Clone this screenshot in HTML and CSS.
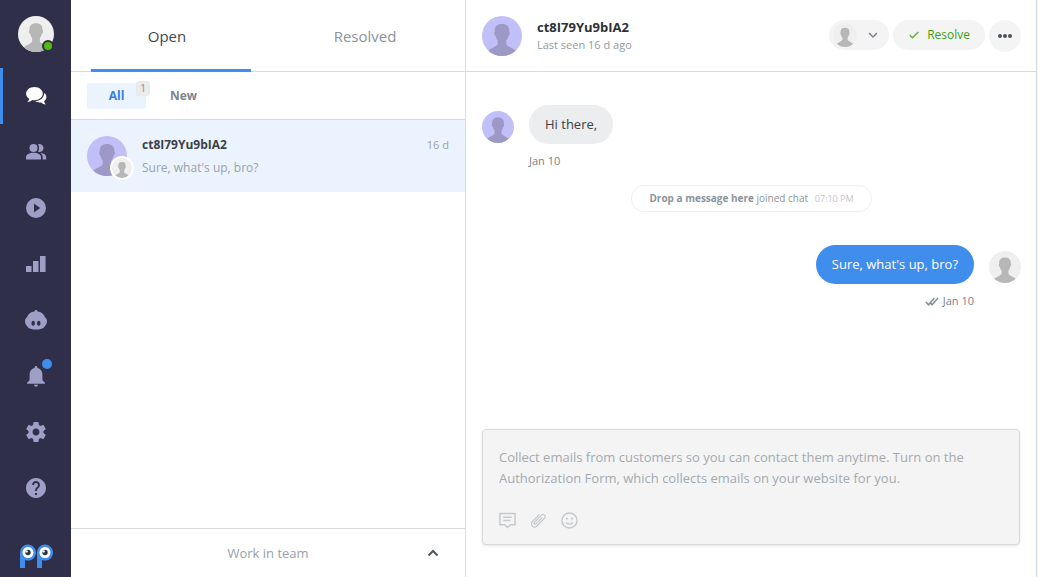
FILE: index.html
```html
<!DOCTYPE html>
<html lang="en">
<head>
    <meta charset="UTF-8">
    <meta name="viewport" content="width=device-width, initial-scale=1.0">
    <title>Inbox</title>
    <link rel="stylesheet" href="styles.css">
</head>
<body>
    <!-- Shared shapes -->
    <svg class="sprite" aria-hidden="true">
        <symbol id="person" viewBox="0 0 40 40">
            <path d="M20 8c-5 0-7.600 2.600-7.300 7.500-1 .5-.4 4 .9 4.500.5 2.300 1.200 3.600 2.100 4.500v3.500c-1 3-6 3.500-9.600 7C9 39 14 41 20 41s11-2 13.900-6c-3.600-3.500-8.600-4-9.600-7v-3.500c.9-.9 1.600-2.200 2.100-4.500 1.300-.5 1.900-4 .9-4.500C27.600 10.600 25 8 20 8z"/>
        </symbol>
    </svg>

    <div class="app">
        <nav class="sidebar" aria-label="Main">
            <button class="profile" type="button" aria-label="Profile">
                <svg class="avatar gray"><use href="#person"/></svg>
                <span class="online"></span>
            </button>
            <a class="nav-item active" href="#" aria-label="Inbox">
                <svg viewBox="0 0 22 20" width="22" height="20">
                    <path d="M9.500 1C4.800 1 1.100 3.900 1.100 7.600c0 2.200 1.200 4 3.100 5.200-.2 1.300-1 2.400-2 3.200 1.900 0 3.800-.6 5.200-1.900.7.1 1.400.2 2.100.2 4.600 0 8.300-3 8.300-6.700S14.100 1 9.500 1z"/>
                    <path d="M19.200 7c1.400 1 2.200 2.400 2.200 4 0 1.700-.9 3.200-2.300 4.200.2 1.200.8 2.300 1.700 3.200-1.900 0-3.500-.7-4.700-2-2.200.3-4.400-.1-6-1.100C15 15 19 12 19.200 7z"/>
                </svg>
            </a>
            <a class="nav-item" href="#" aria-label="Contacts">
                <svg viewBox="0 0 22 20" width="22" height="20">
                    <circle cx="8.500" cy="6" r="4"/>
                    <path d="M1 17.500v-2.200c0-3 3.500-4.600 7.500-4.600s7.500 1.600 7.500 4.600v2.200z"/>
                    <path d="M13 2.300a4 4 0 1 1 0 7.400c1.500-2.200 1.500-5.200 0-7.400zM15.500 11c3.500.3 5.700 1.900 5.700 4.300v2.200h-3.500v-2.200c0-1.700-.8-3.200-2.200-4.300z"/>
                </svg>
            </a>
            <a class="nav-item" href="#" aria-label="Campaigns">
                <svg viewBox="0 0 20 20" width="20" height="20">
                    <path fill-rule="evenodd" d="M10 0a10 10 0 1 0 0 20 10 10 0 0 0 0-20zM8 5.500l6.200 4.500L8 14.500z"/>
                </svg>
            </a>
            <a class="nav-item" href="#" aria-label="Statistics">
                <svg viewBox="0 0 20 18" width="20" height="18">
                    <path d="M0 11h5.500v6H0zM7 6h5.500v11H7zM14 1h5.500v16H14z"/>
                </svg>
            </a>
            <a class="nav-item" href="#" aria-label="Chatbots">
                <svg viewBox="0 0 22 20" width="22" height="20">
                    <path fill-rule="evenodd" d="M11 0c.9 0 1.500.7 1.500 1.600C16 2 19 4 20 7.300c1.300.8 2 2.200 2 4s-.6 3.300-1.700 4.100C19 18.500 15 19.500 11 19.500s-8-1-9.300-4.100C.6 14.600 0 13.100 0 11.300s.7-3.200 2-4C3 4 6 2 9.500 1.600 9.500.7 10.100 0 11 0zM8.200 10.700c-2.300 0-2.300 5 0 5s2.300-5 0-5zm5.600 0c-2.300 0-2.300 5 0 5s2.300-5 0-5z"/>
                </svg>
            </a>
            <a class="nav-item" href="#" aria-label="Notifications">
                <svg viewBox="0 0 20 22" width="20" height="22">
                    <path d="M10 1c-.8 0-1.400.6-1.400 1.400v.5C5.500 3.500 3.600 6 3.600 9.200v6L1 17.800v1h18v-1l-2.600-2.600v-6c0-3.200-1.900-5.700-5-6.300v-.5C11.400 1.600 10.800 1 10 1zM8 19.800a2 2 0 0 0 4 0z"/>
                </svg>
                <span class="nav-dot"></span>
            </a>
            <a class="nav-item" href="#" aria-label="Settings">
                <svg viewBox="2 2 20 20" width="20" height="20">
                    <path d="M19.430 12.980c.04-.32.070-.64.070-.98s-.03-.66-.07-.98l2.110-1.650c.19-.15.24-.42.120-.64l-2-3.460c-.12-.22-.39-.3-.61-.22l-2.490 1c-.52-.4-1.080-.73-1.690-.98l-.38-2.650C14.460 2.180 14.250 2 14 2h-4c-.25 0-.46.18-.49.42l-.38 2.650c-.61.25-1.170.59-1.690.98l-2.490-1c-.23-.09-.49 0-.61.22l-2 3.460c-.13.220-.07.490.12.640l2.110 1.650c-.04.320-.07.650-.07.980s.03.660.07.980l-2.110 1.650c-.19.150-.24.420-.12.640l2 3.460c.12.220.39.300.61.220l2.490-1c.52.400 1.080.730 1.690.980l.38 2.650c.03.240.24.420.49.420h4c.25 0 .46-.18.49-.42l.38-2.650c.61-.25 1.170-.59 1.690-.98l2.490 1c.23.090.49 0 .61-.22l2-3.460c.12-.22.070-.49-.12-.64l-2.110-1.650zM12 15.500c-1.930 0-3.500-1.570-3.500-3.500s1.570-3.500 3.500-3.500 3.500 1.570 3.500 3.500-1.570 3.500-3.500 3.500z"/>
                </svg>
            </a>
            <a class="nav-item" href="#" aria-label="Help">
                <svg viewBox="2 2 20 20" width="20" height="20">
                    <path d="M12 2C6.480 2 2 6.480 2 12s4.480 10 10 10 10-4.480 10-10S17.520 2 12 2zm1 17h-2v-2h2v2zm2.070-7.750l-.9.920C13.450 12.900 13 13.500 13 15h-2v-.5c0-1.100.45-2.100 1.170-2.830l1.240-1.260c.37-.36.590-.86.590-1.410 0-1.100-.9-2-2-2s-2 .9-2 2H8c0-2.210 1.790-4 4-4s4 1.790 4 4c0 .88-.36 1.680-.93 2.250z"/>
                </svg>
            </a>
            <a class="logo" href="#" aria-label="Home">
                <svg viewBox="0 0 34 24" width="34" height="24">
                    <path fill="#3f8eee" d="M1 24V9a8 8 0 1 1 5 7v8zM18 24V9a8 8 0 1 1 5 7v8z"/>
                    <circle cx="9" cy="8.500" r="5.500" fill="#fff"/>
                    <circle cx="26" cy="8.500" r="5.500" fill="#fff"/>
                    <circle cx="9" cy="8.500" r="2.700" fill="#263746"/>
                    <circle cx="26" cy="8.500" r="2.700" fill="#263746"/>
                    <circle cx="7.600" cy="7.400" r="1.200" fill="#fff"/>
                    <circle cx="24.600" cy="7.400" r="1.200" fill="#fff"/>
                </svg>
            </a>
        </nav>

        <section class="inbox" aria-label="Conversations">
            <div class="tabs">
                <button class="tab open active" type="button">Open</button>
                <button class="tab" type="button">Resolved</button>
            </div>
            <div class="filters">
                <button class="filter active" type="button">All<span class="count">1</span></button>
                <button class="filter" type="button">New</button>
            </div>
            <div class="list">
                <a class="dialog" href="#">
                    <span class="dialog-avatar">
                        <svg class="avatar violet"><use href="#person"/></svg>
                        <svg class="avatar gray mini"><use href="#person"/></svg>
                    </span>
                    <span class="dialog-text">
                        <span class="dialog-top"><strong>ct8I79Yu9bIA2</strong><time>16 d</time></span>
                        <span class="preview">Sure, what's up, bro?</span>
                    </span>
                </a>
            </div>
            <button class="team" type="button">
                <span>Work in team</span>
                <svg viewBox="0 0 12 8" width="12" height="8"><path d="M1.500 6.500L6 2l4.500 4.500" fill="none" stroke="#4d565f" stroke-width="2"/></svg>
            </button>
        </section>

        <main class="chat">
            <header class="chat-header">
                <svg class="avatar violet"><use href="#person"/></svg>
                <div class="chat-user">
                    <h1>ct8I79Yu9bIA2</h1>
                    <p>Last seen 16 d ago</p>
                </div>
                <div class="actions">
                    <button class="assign" type="button" aria-label="Assign">
                        <svg class="avatar gray small"><use href="#person"/></svg>
                        <svg viewBox="0 0 10 6" width="10" height="6"><path d="M1 1l4 4 4-4" fill="none" stroke="#77818b" stroke-width="1.400"/></svg>
                    </button>
                    <button class="resolve" type="button">
                        <svg viewBox="0 0 10 8" width="10" height="8"><path d="M.8 4.200l2.700 2.600L9.300 1" fill="none" stroke="#5cb531" stroke-width="1.500"/></svg>
                        Resolve
                    </button>
                    <button class="more" type="button" aria-label="More">
                        <svg viewBox="0 0 14 4" width="14" height="4"><circle cx="2" cy="2" r="2"/><circle cx="7" cy="2" r="2"/><circle cx="12" cy="2" r="2"/></svg>
                    </button>
                </div>
            </header>

            <div class="messages">
                <div class="message">
                    <svg class="avatar violet medium"><use href="#person"/></svg>
                    <p class="bubble">Hi there,</p>
                </div>
                <div class="meta">Jan 10</div>

                <div class="event"><b>Drop a message here</b> joined chat <time>07:10 PM</time></div>

                <div class="message out">
                    <p class="bubble">Sure, what's up, bro?</p>
                    <svg class="avatar gray medium"><use href="#person"/></svg>
                </div>
                <div class="meta out">
                    <svg viewBox="0 0 14 9" width="14" height="9"><path d="M1 5l2.500 2.800L9.500 1M5.500 6l1.500 1.800L13 1" fill="none" stroke="#858d95" stroke-width="1.500"/></svg>
                    Jan 10
                </div>
            </div>

            <form class="composer">
                <textarea rows="2" aria-label="Message" placeholder="Collect emails from customers so you can contact them anytime. Turn on the Authorization Form, which collects emails on your website for you."></textarea>
                <div class="tools">
                    <button type="button" aria-label="Saved replies">
                        <svg viewBox="0 0 18 18" width="17" height="17"><path d="M1 1.500h16v12h-4.900L9 16.400l-3.100-2.900H1zM4.500 5.500h9M4.500 9h7.500"/></svg>
                    </button>
                    <button type="button" aria-label="Attach file">
                        <svg viewBox="0 0 18 18" width="17" height="17"><path d="M13 6l-6.600 6.600c-1.200 1.200-2.900-.4-1.700-1.600l7.600-7.700c2.300-2.200 5.500 1 3.200 3.200l-8.200 8.300c-3.300 3.200-8-1.400-4.700-4.700l7.500-7.500" stroke-width="1.300"/></svg>
                    </button>
                    <button type="button" aria-label="Emoji">
                        <svg viewBox="0 0 18 18" width="17" height="17"><circle cx="9" cy="9" r="8"/><path d="M5.500 11c1.500 2.500 5.500 2.500 7 0"/><path class="eyes" d="M6.200 6v2M11.800 6v2"/></svg>
                    </button>
                </div>
            </form>
        </main>
    </div>
</body>
</html>
```
FILE: styles.css
```css
* {
    margin: 0;
    padding: 0;
    box-sizing: border-box;
}

body {
    font-family: "Open Sans", "Noto Sans", sans-serif;
    font-size: 13px;
    color: #3a4148;
    background: #f4f5f8;
}

button, textarea {
    font: inherit;
    color: inherit;
    border: none;
    background: none;
}

button {
    cursor: pointer;
}

a {
    color: inherit;
    text-decoration: none;
}

svg {
    display: block;
    flex-shrink: 0;
}

.sprite {
    position: absolute;
    width: 0;
    height: 0;
}

.app {
    display: flex;
    height: 100vh;
    padding-right: 1px;
}

/* Avatars */
.avatar {
    width: 40px;
    height: 40px;
    border-radius: 50%;
}

.avatar.medium {
    width: 32px;
    height: 32px;
    margin-bottom: 1px;
}

.avatar.small {
    width: 24px;
    height: 24px;
}

.violet {
    background: #c1bff7;
    fill: #9c99c6;
}

.gray {
    background: #efefef;
    fill: #b7b7b7;
}

/* Sidebar */
.sidebar {
    display: flex;
    flex-direction: column;
    width: 71px;
    flex-shrink: 0;
    background: #302f4a;
    fill: #9d9fc6;
}

.profile {
    position: relative;
    align-self: center;
    margin: 16px 0;
}

.profile .avatar {
    width: 36px;
    height: 36px;
}

.online {
    position: absolute;
    right: 0;
    bottom: 0;
    width: 12px;
    height: 12px;
    border: 2px solid #302f4a;
    border-radius: 50%;
    background: #54b80f;
}

.nav-item {
    position: relative;
    display: flex;
    align-items: center;
    justify-content: center;
    height: 56px;
    border-left: 3px solid transparent;
    padding-right: 3px;
}

.nav-item.active {
    border-left-color: #3f8eee;
    fill: #fff;
}

.nav-dot {
    position: absolute;
    top: 11px;
    right: 19px;
    width: 10px;
    height: 10px;
    border-radius: 50%;
    background: #3f8eee;
}

.logo {
    align-self: center;
    margin-top: auto;
    padding-bottom: 9px;
}

/* Conversation list */
.inbox {
    display: flex;
    flex-direction: column;
    flex: 0 0 395px;
    background: #fff;
    border-right: 1px solid #d9dbde;
}

.tabs {
    display: flex;
    height: 72px;
    padding-right: 4px;
    border-bottom: 1px solid #d7dadd;
}

.tab {
    position: relative;
    flex: 1;
    font-size: 15px;
    color: #8b939b;
}

.tab.open {
    padding-right: 6px;
}

.tab.active {
    color: #40474e;
}

.tab.active::after {
    content: "";
    position: absolute;
    left: 20px;
    right: 18px;
    bottom: -1px;
    height: 3px;
    background: #3f8eee;
}

.filters {
    display: flex;
    align-items: center;
    gap: 8px;
    height: 48px;
    padding: 0 16px;
    border-bottom: 1px solid #d7dadd;
}

.filter {
    position: relative;
    min-width: 59px;
    height: 26px;
    border-radius: 3px;
    font-size: 12px;
    font-weight: 700;
    color: #7d858d;
}

.filter.active {
    background: #ebf4fe;
    color: #2f7ee6;
}

.count {
    position: absolute;
    top: -2px;
    right: -4px;
    width: 14px;
    border-radius: 3px;
    background: #ebebec;
    font-size: 10px;
    font-weight: 400;
    line-height: 15px;
    color: #8b8f93;
}

.list {
    flex: 1;
}

.dialog {
    display: flex;
    gap: 15px;
    height: 72px;
    padding: 14px 16px;
    background: #ebf3fe;
}

.dialog-avatar {
    position: relative;
    align-self: center;
}

.avatar.mini {
    position: absolute;
    left: 23px;
    top: 20px;
    width: 24px;
    height: 24px;
    border: 2px solid #fff;
}

.dialog-text {
    flex: 1;
    line-height: 22px;
}

.dialog-top {
    display: flex;
    justify-content: space-between;
}

.dialog-top strong {
    font-size: 12px;
}

.dialog-top time {
    font-size: 11px;
    color: #9aa2aa;
}

.preview {
    font-size: 12px;
    color: #9aa2aa;
}

.team {
    display: flex;
    align-items: center;
    height: 49px;
    padding: 0 26px 0 0;
    border-top: 1px solid #d7dadd;
    color: #98a0a7;
}

.team span {
    flex: 1;
    padding-left: 38px;
}

/* Chat */
.chat {
    display: flex;
    flex-direction: column;
    flex: 1;
    min-width: 0;
    background: #fff;
    border-right: 1px solid #d9dbe3;
}

.chat-header {
    display: flex;
    align-items: center;
    gap: 15px;
    height: 72px;
    padding: 0 15px 0 16px;
    border-bottom: 1px solid #d7dadd;
}

.chat-user {
    flex: 1;
    line-height: 18px;
}

.chat-user h1 {
    font-size: 13px;
    color: #2c3137;
}

.chat-user p {
    font-size: 11px;
    color: #939ba2;
}

.actions {
    display: flex;
    gap: 4px;
}

.actions button {
    display: flex;
    align-items: center;
    height: 30px;
    border-radius: 16px;
    background: #f4f4f4;
}

.actions .assign {
    gap: 11px;
    padding: 0 11px 0 4px;
}

.actions .resolve {
    gap: 8px;
    padding: 0 15px 0 16px;
    font-size: 12px;
    color: #3fa010;
}

.actions .more {
    justify-content: center;
    width: 32px;
    height: 32px;
    fill: #4a525c;
}

.messages {
    flex: 1;
    padding: 33px 15px 0 16px;
}

.message {
    display: flex;
    align-items: flex-end;
    gap: 15px;
}

.message.out {
    justify-content: flex-end;
    margin-top: 33px;
}

.bubble {
    padding: 0 16px;
    border-radius: 20px;
    background: #ecedef;
    line-height: 39px;
}

.out .bubble {
    background: #3f8eee;
    color: #fff;
}

.meta {
    display: flex;
    align-items: center;
    gap: 4px;
    margin-top: 8px;
    padding: 0 47px;
    font-size: 11px;
    line-height: 18px;
    color: #79818a;
}

.meta.out {
    justify-content: flex-end;
}

.event {
    width: fit-content;
    margin: 15px auto 0;
    padding: 0 17px;
    border: 1px solid #efefef;
    border-radius: 13px;
    font-size: 10px;
    line-height: 24px;
    color: #8c949b;
}

.event time {
    margin-left: 4px;
    font-size: 9px;
    color: #c3c6ca;
}

.composer {
    margin: 0 16px 32px;
    padding: 17px 16px 15px;
    border: 1px solid #d8dadd;
    border-radius: 4px;
    background: #f4f4f4;
    box-shadow: 0 1px 3px rgba(0, 0, 0, 0.1);
}

.composer textarea {
    display: block;
    width: 100%;
    resize: none;
    outline: none;
    line-height: 21px;
}

.composer textarea::placeholder {
    color: #a3aab1;
}

.tools {
    display: flex;
    gap: 14px;
    margin-top: 23px;
}

.tools svg {
    fill: none;
    stroke: #c5c8cd;
    stroke-width: 1.500;
}

.tools .eyes {
    stroke-width: 2;
}
```
